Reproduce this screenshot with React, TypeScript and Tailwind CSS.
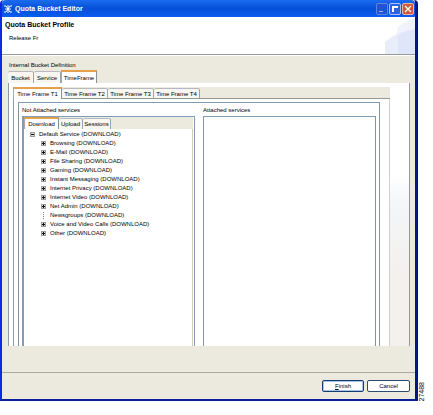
import React, { useState } from 'react';
import clsx from 'clsx';

const services = [
  { name: 'Browsing (DOWNLOAD)', expandable: true },
  { name: 'E-Mail (DOWNLOAD)', expandable: true },
  { name: 'File Sharing (DOWNLOAD)', expandable: true },
  { name: 'Gaming (DOWNLOAD)', expandable: true },
  { name: 'Instant Messaging (DOWNLOAD)', expandable: true },
  { name: 'Internet Privacy (DOWNLOAD)', expandable: true },
  { name: 'Internet Video (DOWNLOAD)', expandable: true },
  { name: 'Net Admin (DOWNLOAD)', expandable: true },
  { name: 'Newsgroups (DOWNLOAD)', expandable: false },
  { name: 'Voice and Video Calls (DOWNLOAD)', expandable: true },
  { name: 'Other (DOWNLOAD)', expandable: true },
];

interface TabStripProps {
  label: string;
  tabs: Array<{ name: string; width: string }>;
  initial: string;
  className?: string;
  underline?: boolean;
}

function TabStrip({ label, tabs, initial, className, underline }: TabStripProps) {
  const [active, setActive] = useState(initial);

  return (
    <div role="tablist" aria-label={label} className={clsx('flex items-stretch bg-[#ece9df]', className)}>
      {tabs.map(tab => (
        <button
          key={tab.name}
          type="button"
          role="tab"
          aria-selected={tab.name === active}
          onClick={() => setActive(tab.name)}
          className={clsx(
            'shrink-0 whitespace-nowrap border-r text-center leading-[10px]',
            tab.width,
            tab.name === active
              ? 'border-t-2 border-l border-t-[#e5a04b] border-l-[#a3aab0] border-r-[#8b9297] bg-white'
              : 'mt-px rounded-t-xs border-t border-t-[#b4bac0] border-r-[#9aa4ae] bg-[#f7f6f1]',
            underline && tab.name !== active && 'border-b border-b-[#919b9c]'
          )}
        >
          {tab.name}
        </button>
      ))}
      <div className={clsx('flex-1', underline && 'border-b border-[#919b9c]')} />
    </div>
  );
}

function TreeBox({ open }: { open?: boolean }) {
  return (
    <svg width="5" height="5" viewBox="0 0 5 5" shapeRendering="crispEdges" className="shrink-0" aria-hidden="true">
      <rect width="5" height="5" fill="#9a9a9a" />
      <rect x="1" y="1" width="3" height="3" fill="#dcdcdc" />
      <rect x="1" y="2" width="3" height="1" fill="#111" />
      {!open && <rect x="2" y="1" width="1" height="3" fill="#111" />}
    </svg>
  );
}

function TitleBar() {
  return (
    <div className="flex h-[17px] items-center justify-between rounded-t-sm bg-linear-to-b from-[#1b6cf0] via-[#0550d8] to-[#0a5cf2] pl-[2px]">
      <div className="flex items-center gap-[3px]">
        <svg width="8" height="8" viewBox="0 0 8 8" stroke="#fff" fill="none" aria-hidden="true">
          <path d="M0 1h2l4 6h2M8 1H6L2 7H0M4 0v8M1 4h6" strokeWidth="1" />
        </svg>
        <h1 className="text-[7px] font-bold leading-[10px] text-white">Quota Bucket Editor</h1>
      </div>
      <div className="flex gap-px pr-px">
        <button type="button" aria-label="Minimize" className="h-3 w-3 rounded-xs border border-[#5f86e4] bg-[#2452d2]">
          <svg viewBox="0 0 10 10" className="block" aria-hidden="true">
            <path d="M2 7.5h4" stroke="#9db9f5" />
          </svg>
        </button>
        <button type="button" aria-label="Maximize" className="h-3 w-3 rounded-xs border border-[#a9c2f8] bg-[#2b62e4]">
          <svg viewBox="0 0 10 10" className="block" aria-hidden="true">
            <path d="M2 2h6v2H4v4H2z" fill="#fff" />
          </svg>
        </button>
        <button type="button" aria-label="Close" className="h-3 w-3 rounded-xs border border-[#eab5a6] bg-[#d0573a]">
          <svg viewBox="0 0 10 10" className="block" aria-hidden="true">
            <path d="M2 2l6 6M8 2L2 8" stroke="#fff" strokeWidth="1.3" />
          </svg>
        </button>
      </div>
    </div>
  );
}

export default function App() {
  return (
    <div className="flex items-end bg-white font-['Liberation_Sans',Arial,sans-serif] text-[6px] leading-[10px] text-black">
      <div className="min-w-0 flex-1 rounded-t-sm border-r-[3px] border-b-2 border-l-2 border-r-[#04158a] border-b-[#0a1f9c] border-l-[#0a2be0] bg-[#ece9df]">
        <TitleBar />

        {/* Profile heading */}
        <header className="flex h-[38px] justify-between border-b border-[#9c9a94] bg-white">
          <div className="pt-[3px] pl-[3px]">
            <h2 className="text-[7px] font-bold leading-[10px]">Quota Bucket Profile</h2>
            <p className="pt-[3px] pl-1">Release Fr</p>
          </div>
          <svg width="30" height="37" viewBox="0 0 30 37" aria-hidden="true">
            <path d="M12 37V11Q18 5 30 1v36z" fill="#f1f3fc" />
            <path d="M0 37V25Q12 14 30 12v25z" fill="#e9edfa" />
            <path d="M13 37V19Q20 14 30 12v25z" fill="#dfe6f9" />
          </svg>
        </header>

        <main className="border-t border-white pt-1 pr-[5px] pb-[26px] pl-[6px]">
          <p className="pl-px">Internal Bucket Definition</p>

          <TabStrip
            label="Bucket definition"
            initial="TimeFrame"
            className="h-[13px]"
            tabs={[
              { name: 'Bucket', width: 'w-[26px]' },
              { name: 'Service', width: 'w-[27px]' },
              { name: 'TimeFrame', width: 'w-[36px]' },
            ]}
          />

          <div className="border-x border-[#919b9c] bg-linear-to-b from-white from-35% via-[#f4f6f8] via-45% to-[#f3f0ed] to-75% pr-[19px]">
            <div className="bg-white pt-1 pl-1">
              <TabStrip
                label="Time frames"
                initial="Time Frame T1"
                className="h-3"
                underline
                tabs={[
                  { name: 'Time Frame T1', width: 'w-[49px]' },
                  { name: 'Time Frame T2', width: 'w-[46px]' },
                  { name: 'Time Frame T3', width: 'w-[46px]' },
                  { name: 'Time Frame T4', width: 'w-[46px]' },
                ]}
              />

              <div className="border-r border-l border-r-[#cfcfcf] border-l-[#919b9c] pt-[3px] pr-[9px] pl-1">
                <div className="grid grid-cols-2 gap-2 border-x border-t border-x-[#8b9297] border-t-[#7f9db9] px-[3px]">
                  <section className="flex flex-col">
                    <h3 className="h-[13px] pt-[2px]">Not Attached services</h3>
                    <div className="flex-1 border-t border-r border-l-2 border-[#7f9db9] pr-px">
                      <TabStrip
                        label="Direction"
                        initial="Download"
                        className="h-3"
                        tabs={[
                          { name: 'Download', width: 'w-[35px]' },
                          { name: 'Upload', width: 'w-6' },
                          { name: 'Sessions', width: 'w-7' },
                        ]}
                      />
                      <ul role="tree" className="min-h-[217px] border-r border-[#cfcdc0] pt-px pl-[6px] leading-[9px]">
                        <li role="treeitem" aria-expanded="true">
                          <div className="flex items-center gap-1">
                            <TreeBox open />
                            <span className="whitespace-nowrap">Default Service (DOWNLOAD)</span>
                          </div>
                          <ul role="group" className="pl-[11px]">
                            {services.map(service => (
                              <li key={service.name} role="treeitem" className="flex items-center gap-1">
                                {service.expandable ? (
                                  <TreeBox />
                                ) : (
                                  <span className="flex w-[5px] justify-center">
                                    <span className="h-[7px] border-l border-dotted border-[#888]" />
                                  </span>
                                )}
                                <span className="whitespace-nowrap">{service.name}</span>
                              </li>
                            ))}
                          </ul>
                        </li>
                      </ul>
                    </div>
                  </section>

                  <section className="flex flex-col">
                    <h3 className="h-[13px] pt-[2px]">Attached services</h3>
                    <div className="flex-1 border-x border-t border-x-[#8b9297] border-t-[#7f9db9]" />
                  </section>
                </div>
              </div>
            </div>
          </div>
        </main>

        {/* Dialog actions */}
        <footer className="flex justify-end gap-[3px] border-t border-[#aca89c] pt-[7px] pr-[5px] pb-[7px]">
          <button
            type="button"
            className="h-3 w-[42px] rounded-xs border border-[#123c70] bg-white leading-[10px] inset-ring inset-ring-[#a9c3ee]"
          >
            <span className="underline">F</span>inish
          </button>
          <button type="button" className="h-3 w-[43px] rounded-xs border border-[#2b4a6f] bg-white leading-[10px]">
            Cancel
          </button>
        </footer>
      </div>

      {/* Figure number printed beside the window */}
      <div className="w-[15px]">
        <span className="block rotate-180 text-[7px] [writing-mode:vertical-rl] leading-[7px]">27488</span>
      </div>
    </div>
  );
}
